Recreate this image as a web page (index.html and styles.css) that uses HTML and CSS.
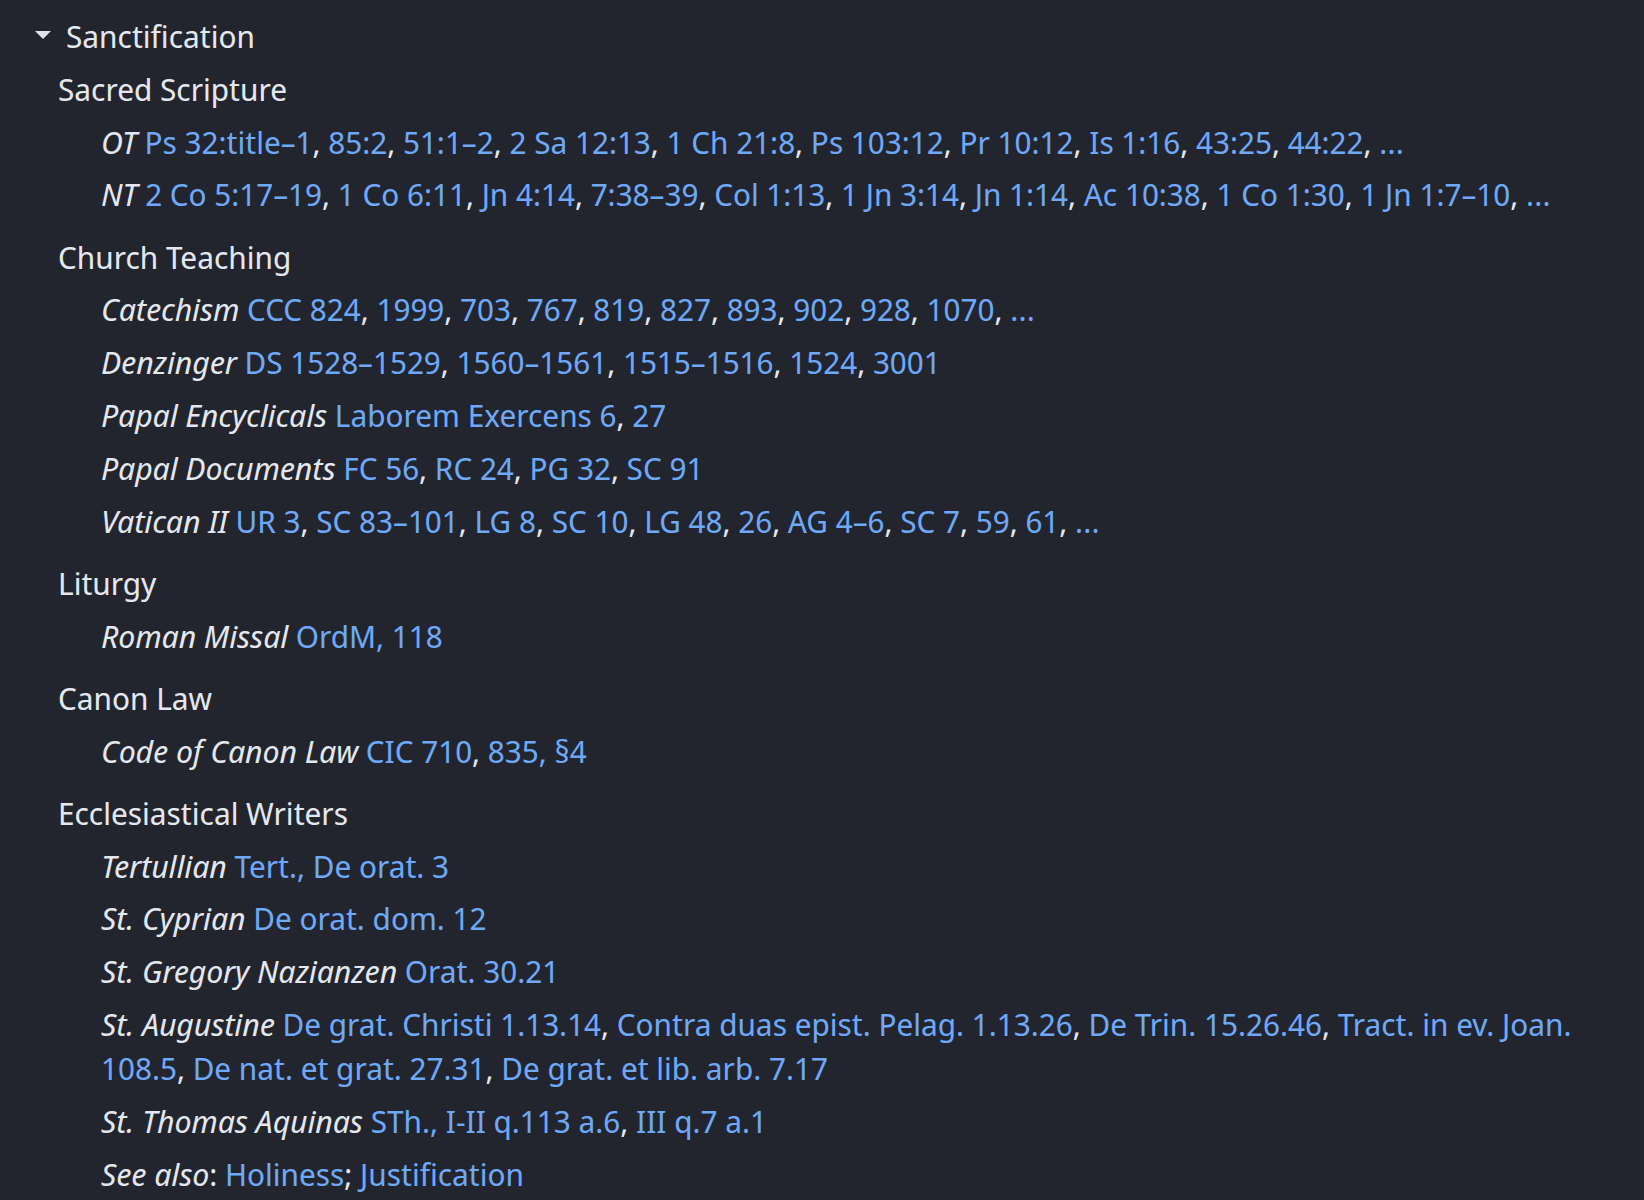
FILE: index.html
```html
<!DOCTYPE html>
<html lang="en">
<head>
  <meta charset="UTF-8" />
  <meta name="viewport" content="width=device-width, initial-scale=1.0" />
  <title>Sanctification</title>
  <link rel="stylesheet" href="styles.css">
</head>
<body>
  <div class="entry">
    <div class="topic">
      <span class="caret">
        <svg width="16" height="8" viewBox="0 0 16 8"><path d="M0 0 L16 0 L8 8 Z"></path></svg>
      </span>
      <span class="topic-title">Sanctification</span>
    </div>

    <section class="group">
      <h2 class="group-title">Sacred Scripture</h2>
      <ul class="refs">
        <li><em>OT</em> <a href="#">Ps 32:title–1</a>, <a href="#">85:2</a>, <a href="#">51:1–2</a>, <a href="#">2 Sa 12:13</a>, <a href="#">1 Ch 21:8</a>, <a href="#">Ps 103:12</a>, <a href="#">Pr 10:12</a>, <a href="#">Is 1:16</a>, <a href="#">43:25</a>, <a href="#">44:22</a>, <a href="#">…</a></li>
        <li><em>NT</em> <a href="#">2 Co 5:17–19</a>, <a href="#">1 Co 6:11</a>, <a href="#">Jn 4:14</a>, <a href="#">7:38–39</a>, <a href="#">Col 1:13</a>, <a href="#">1 Jn 3:14</a>, <a href="#">Jn 1:14</a>, <a href="#">Ac 10:38</a>, <a href="#">1 Co 1:30</a>, <a href="#">1 Jn 1:7–10</a>, <a href="#">…</a></li>
      </ul>
    </section>

    <section class="group">
      <h2 class="group-title">Church Teaching</h2>
      <ul class="refs">
        <li><em>Catechism</em> <a href="#">CCC 824</a>, <a href="#">1999</a>, <a href="#">703</a>, <a href="#">767</a>, <a href="#">819</a>, <a href="#">827</a>, <a href="#">893</a>, <a href="#">902</a>, <a href="#">928</a>, <a href="#">1070</a>, <a href="#">…</a></li>
        <li><em>Denzinger</em> <a href="#">DS 1528–1529</a>, <a href="#">1560–1561</a>, <a href="#">1515–1516</a>, <a href="#">1524</a>, <a href="#">3001</a></li>
        <li><em>Papal Encyclicals</em> <a href="#">Laborem Exercens 6</a>, <a href="#">27</a></li>
        <li><em>Papal Documents</em> <a href="#">FC 56</a>, <a href="#">RC 24</a>, <a href="#">PG 32</a>, <a href="#">SC 91</a></li>
        <li><em>Vatican II</em> <a href="#">UR 3</a>, <a href="#">SC 83–101</a>, <a href="#">LG 8</a>, <a href="#">SC 10</a>, <a href="#">LG 48</a>, <a href="#">26</a>, <a href="#">AG 4–6</a>, <a href="#">SC 7</a>, <a href="#">59</a>, <a href="#">61</a>, <a href="#">…</a></li>
      </ul>
    </section>

    <section class="group">
      <h2 class="group-title">Liturgy</h2>
      <ul class="refs">
        <li><em>Roman Missal</em> <a href="#">OrdM, 118</a></li>
      </ul>
    </section>

    <section class="group">
      <h2 class="group-title">Canon Law</h2>
      <ul class="refs">
        <li><em>Code of Canon Law</em> <a href="#">CIC 710</a>, <a href="#">835, §4</a></li>
      </ul>
    </section>

    <section class="group">
      <h2 class="group-title">Ecclesiastical Writers</h2>
      <ul class="refs">
        <li><em>Tertullian</em> <a href="#">Tert., De orat. 3</a></li>
        <li><em>St. Cyprian</em> <a href="#">De orat. dom. 12</a></li>
        <li><em>St. Gregory Nazianzen</em> <a href="#">Orat. 30.21</a></li>
        <li><em>St. Augustine</em> <a href="#">De grat. Christi 1.13.14</a>, <a href="#">Contra duas epist. Pelag. 1.13.26</a>, <a href="#">De Trin. 15.26.46</a>, <a href="#">Tract. in ev. Joan. 108.5</a>, <a href="#">De nat. et grat. 27.31</a>, <a href="#">De grat. et lib. arb. 7.17</a></li>
        <li><em>St. Thomas Aquinas</em> <a href="#">STh., I-II q.113 a.6</a>, <a href="#">III q.7 a.1</a></li>
        <li><em>See also</em>: <a href="#">Holiness</a>; <a href="#">Justification</a></li>
      </ul>
    </section>
  </div>
</body>
</html>
```

FILE: styles.css
```css
body {
  margin: 0;
  padding: 14px 30px 0 0;
  background-color: #22252d;
  color: #e4e7ee;
  font-family: "Noto Sans Display", "Noto Sans", sans-serif;
  font-size: 31.6px;
  line-height: 44px;
}
.entry {
  padding-left: 35px;
}
.topic {
  display: flex;
  align-items: center;
  margin-bottom: 8.8px;
}
.caret {
  display: flex;
  width: 31px;
  padding-bottom: 2px;
}
.caret svg path {
  fill: #dfe2e9;
}
.topic-title {
  font-weight: normal;
}
.group {
  padding-left: 23px;
  margin-bottom: 18.2px;
}
.group-title {
  margin: 0 0 8.8px;
  font-size: inherit;
  font-weight: normal;
  line-height: inherit;
}
.refs {
  list-style: none;
  margin: 0;
  padding: 0 0 0 43px;
}
.refs li {
  margin-bottom: 8.8px;
}
.refs em {
  font-style: italic;
}
.refs a {
  color: #6ea8f7;
  text-decoration: none;
}
```
